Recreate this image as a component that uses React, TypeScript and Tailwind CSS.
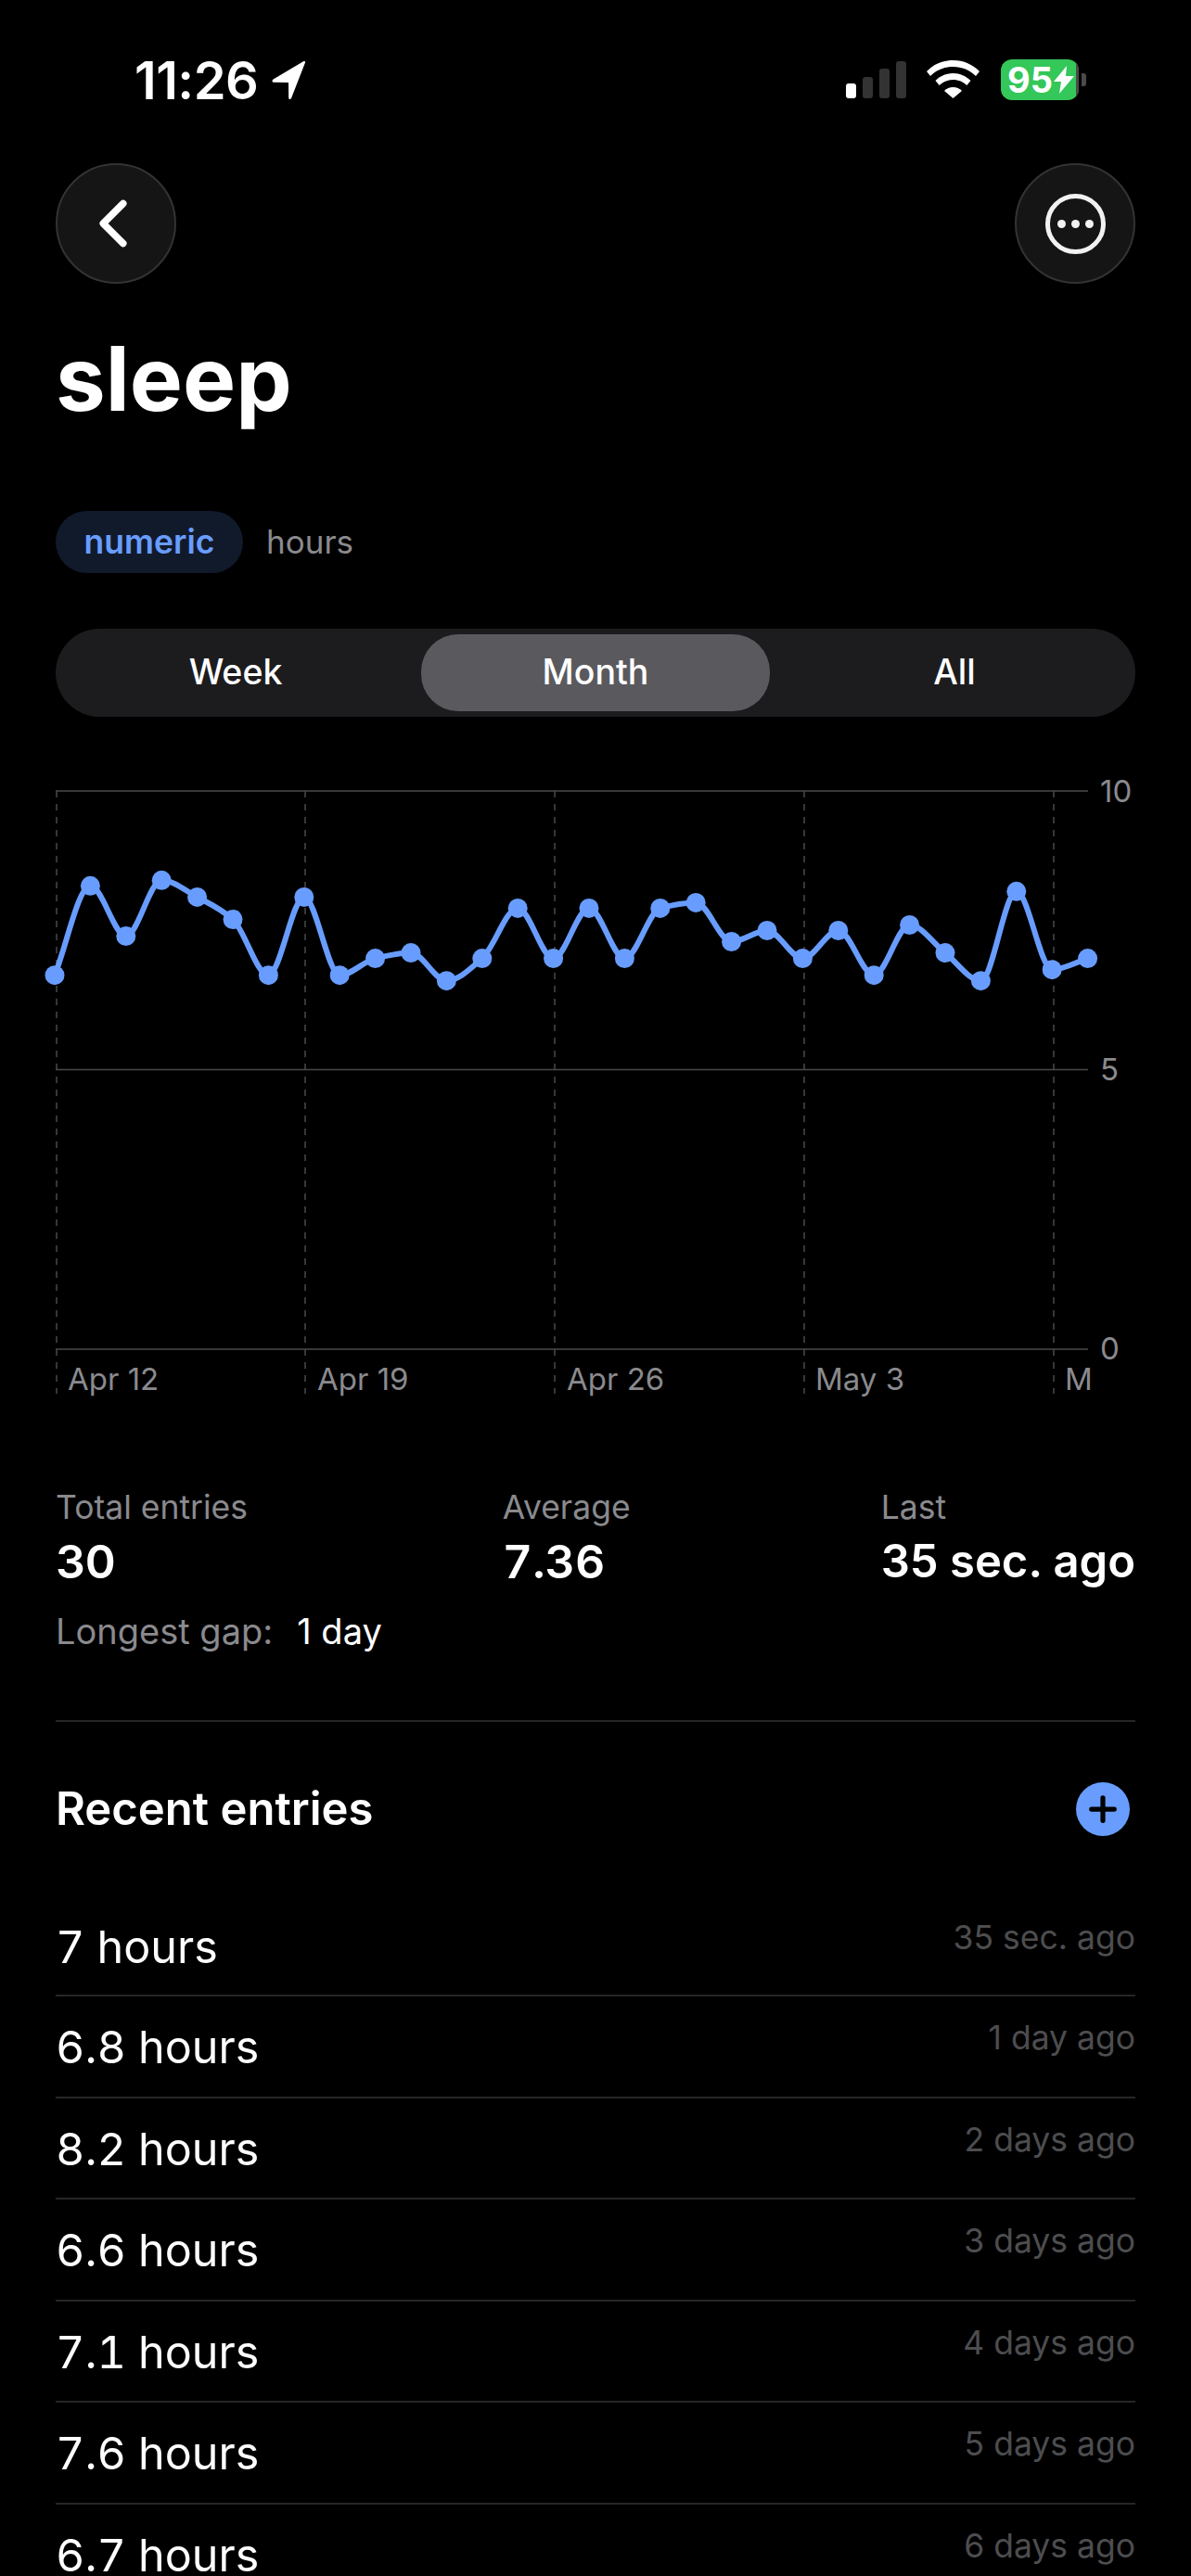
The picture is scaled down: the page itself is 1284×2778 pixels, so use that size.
import React from "react";
import { ChevronLeft, Plus } from "lucide-react";

const values = [6.7,8.3,7.4,8.4,8.1,7.7,6.7,8.1,6.7,7.0,7.1,6.6,7.0,7.9,7.0,7.9,7.0,7.9,8.0,7.3,7.5,7.0,7.5,6.7,7.6,7.1,6.6,8.2,6.8,7.0];
const X0 = 60, STEP = 38.4, TOP = 13, ZERO = 615;
const px = (i: number) => X0 - 1 + i * STEP;
const py = (v: number) => ZERO - (v * (ZERO - TOP)) / 10;

function monotonePath(pts: [number, number][]) {
  const n = pts.length;
  const d: number[] = [];
  const m: number[] = [];
  for (let i = 0; i < n - 1; i++) d.push((pts[i + 1][1] - pts[i][1]) / (pts[i + 1][0] - pts[i][0]));
  m.push(d[0]);
  for (let i = 1; i < n - 1; i++) {
    m.push(d[i - 1] * d[i] <= 0 ? 0 : (2 * d[i - 1] * d[i]) / (d[i - 1] + d[i]));
  }
  m.push(d[n - 2]);
  let s = `M${pts[0][0]} ${pts[0][1]}`;
  for (let i = 0; i < n - 1; i++) {
    const h = (pts[i + 1][0] - pts[i][0]) / 3;
    s += `C${pts[i][0] + h} ${pts[i][1] + m[i] * h} ${pts[i + 1][0] - h} ${pts[i + 1][1] - m[i + 1] * h} ${pts[i + 1][0]} ${pts[i + 1][1]}`;
  }
  return s;
}

function Chart() {
  const pts = values.map((v, i) => [px(i), py(v)] as [number, number]);
  const grid = [61, 329, 598, 867, 1136];
  const labels: [string, number][] = [["Apr 12", 73], ["Apr 19", 342], ["Apr 26", 611], ["May 3", 879], ["M", 1148]];
  return (
    <svg width="1284" height="680" viewBox="0 0 1284 680" className="block">
      {[13, 313.5, 615].map((y) => (
        <line key={y} x1="60" x2="1173" y1={y} y2={y} stroke="#4a4a4a" strokeWidth="1.6" />
      ))}
      {grid.map((x) => (
        <line key={x} x1={x} x2={x} y1="13" y2="663" stroke="#4a4a4a" strokeWidth="1.5" strokeDasharray="7 7" />
      ))}
      {[["10", 25], ["5", 325], ["0", 626]].map(([t, y]) => (
        <text key={t} x="1186" y={y} fill="#8a8a8e" fontSize="33" fontFamily="Inter">{t}</text>
      ))}
      {labels.map(([t, x]) => (
        <text key={t} x={x} y="659" fill="#8a8a8e" fontSize="33" fontFamily="Inter">{t}</text>
      ))}
      <path d={monotonePath(pts)} fill="none" stroke="#689dff" strokeWidth="6" />
      {pts.map(([x, y], i) => (
        <circle key={i} cx={x} cy={y} r="10.5" fill="#689dff" />
      ))}
    </svg>
  );
}

function StatusBar() {
  return (
    <div className="h-[176px] relative">
      <div className="flex items-center pl-[145px] pt-[60px] gap-[12px]">
        <span className="text-[56px] leading-[54px] font-semibold text-white tracking-[-0.5px]">11:26</span>
        <svg width="44" height="42" viewBox="0 0 38 42"><path d="M36 1.5 21 40c-.8 1.6-2.5 1.4-2.8-.3L18 23 2 22.800c-1.800-.4-2-2.400-.4-3.200L34 .3c1.500-.7 2.600.000 2 1.200Z" fill="#fff"/></svg>
      </div>
      <div className="absolute left-[912px] top-[66px] flex items-end gap-[7px] h-[40px]">
        <div className="w-[11px] h-[16px] rounded-[3px] bg-white" />
        <div className="w-[11px] h-[23px] rounded-[3px] bg-[#333333]" />
        <div className="w-[11px] h-[32px] rounded-[3px] bg-[#333333]" />
        <div className="w-[11px] h-[40px] rounded-[3px] bg-[#333333]" />
      </div>
      <svg className="absolute left-[999px] top-[65px]" width="57" height="41" viewBox="0 0 57 41">
        <path d="M28.500 0C17 0 7.500 4.500 0 12l4 5C10.500 10.500 19 7 28.500 7S46.500 10.500 53 17l4-5C49.500 4.500 40 0 28.500 0Z" fill="#fff"/>
        <path d="M28.500 14c-7.500 0-14 3-19 8l4.200 5c3.800-3.700 9-6 14.800-6s11 2.300 14.800 6l4.200-5c-5-5-11.500-8-19-8Z" fill="#fff"/>
        <path d="M28.500 29c-3.700 0-7 1.500-9.500 4l9.500 8 9.500-8c-2.500-2.500-5.800-4-9.500-4Z" fill="#fff"/>
      </svg>
      <div className="absolute left-[1079px] top-[64px] w-[84px] h-[44px] rounded-[12px] bg-[#34c759] overflow-hidden flex items-center pl-[7px]">
        <span className="text-[38px] leading-[44px] font-bold text-white">95</span>
        <svg className="ml-[1px]" width="22" height="32" viewBox="0 0 22 30"><path d="M14 0 0 17h8l-2 13 16-19h-9l1-11Z" fill="#fff"/></svg>
        <div className="absolute right-0 top-0 bottom-0 w-[3px] bg-[#4a4a4a]" />
      </div>
      <div className="absolute left-[1166px] top-[79px] w-[5px] h-[14px] rounded-r-[3px] bg-[#4a4a4a]" />
    </div>
  );
}

const entries = [
  ["7 hours", "35 sec. ago"],
  ["6.8 hours", "1 day ago"],
  ["8.2 hours", "2 days ago"],
  ["6.6 hours", "3 days ago"],
  ["7.1 hours", "4 days ago"],
  ["7.6 hours", "5 days ago"],
  ["6.7 hours", "6 days ago"],
];

export default function App() {
  return (
    <div className="w-[1284px] h-[2778px] overflow-hidden bg-black text-white font-['Inter',sans-serif]">
      <StatusBar />
      <div className="px-[60px]">
        <div className="flex justify-between">
          <div className="w-[130px] h-[130px] rounded-full bg-[#151515] border-[2px] border-[#333333] flex items-center justify-center">
            <ChevronLeft size={86} strokeWidth={2.1} className="text-white -ml-[6px]" />
          </div>
          <div className="w-[130px] h-[130px] rounded-full bg-[#151515] border-[2px] border-[#333333] flex items-center justify-center">
            <div className="w-[65px] h-[65px] rounded-full border-[5px] border-[#f2f2f2] flex items-center justify-center gap-[6px]">
              <div className="w-[9px] h-[9px] rounded-full bg-[#f2f2f2]" />
              <div className="w-[9px] h-[9px] rounded-full bg-[#f2f2f2]" />
              <div className="w-[9px] h-[9px] rounded-full bg-[#f2f2f2]" />
            </div>
          </div>
        </div>
        <div className="mt-[64px] h-[76px] text-[96px] leading-[76px] font-bold">sleep</div>
        <div className="mt-[105px] flex items-center gap-[25px]">
          <div className="w-[202px] h-[67px] rounded-[34px] bg-[#111a2b] flex items-center justify-center text-[35.500px] font-semibold text-[#689dff]">numeric</div>
          <div className="text-[35px] text-[#8a8a8e]">hours</div>
        </div>
        <div className="mt-[60px] h-[95px] rounded-[48px] bg-[#1c1c1e] relative flex items-center text-[37.500px] font-medium">
          <div className="w-[388px] text-center">Week</div>
          <div className="w-[376px] h-[83px] rounded-[40px] bg-[#5a5a5e] flex items-center justify-center ml-[6px]">Month</div>
          <div className="flex-1 text-center pl-[4px]">All</div>
        </div>
      </div>
      <div className="mt-[67px]">
        <Chart />
      </div>
      <div className="px-[60px] mt-[86px]">
        <div className="flex">
          <div className="w-[482px]">
            <div className="text-[35.500px] leading-[40px] text-[#8a8a8e]">Total entries</div>
            <div className="text-[50px] leading-[60px] mt-[8px] font-semibold">30</div>
          </div>
          <div className="w-[408px]">
            <div className="text-[35.500px] leading-[40px] text-[#8a8a8e]">Average</div>
            <div className="text-[50px] leading-[60px] mt-[8px] font-semibold tabular-nums">7.36</div>
          </div>
          <div className="flex-1 whitespace-nowrap">
            <div className="text-[35.500px] leading-[40px] text-[#8a8a8e]">Last</div>
            <div className="text-[49px] leading-[60px] mt-[8px] font-semibold">35 sec. ago</div>
          </div>
        </div>
        <div className="mt-[23px] flex items-center text-[38px] leading-[44px]">
          <span className="text-[#8a8a8e]">Longest gap:</span>
          <span className="ml-[26px] text-[38px] text-white">1 day</span>
        </div>
        <div className="mt-[74px] h-[2px] bg-[#262626]" />
        <div className="mt-[64px] flex items-center justify-between h-[60px]">
          <div className="text-[49px] font-semibold">Recent entries</div>
          <div className="w-[58px] h-[58px] rounded-full bg-[#689dff] flex items-center justify-center mr-[6px]">
            <Plus size={42} strokeWidth={3} className="text-black" />
          </div>
        </div>
        <div className="mt-[64px]">
          {entries.map(([a, b]) => (
            <div key={a} className="h-[109.500px] border-b-[2px] border-[#262626] flex justify-between items-start pt-[25px] first:h-[108px]">
              <div className="text-[48.500px] leading-[60px] tabular-nums">{a}</div>
              <div className="text-[35.500px] leading-[44px] -mt-[2px] text-[#4d4d4f]">{b}</div>
            </div>
          ))}
        </div>
      </div>
    </div>
  );
}
